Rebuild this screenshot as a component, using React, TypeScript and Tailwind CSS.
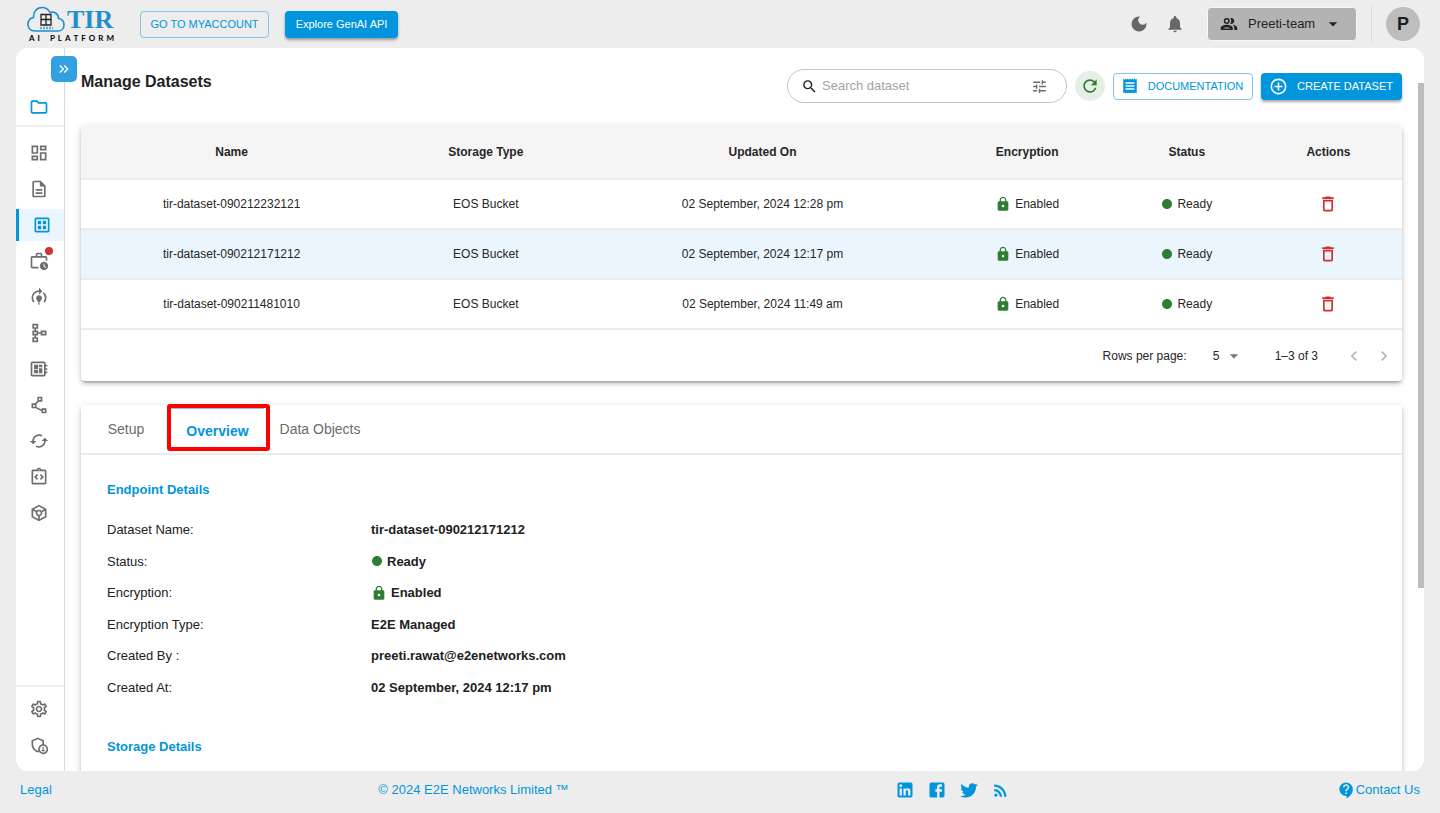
import React, { useState } from "react";
import {
  MdAddCircleOutline,
  MdArrowDropDown,
  MdCached,
  MdChevronLeft,
  MdChevronRight,
  MdCircle,
  MdContactSupport,
  MdDarkMode,
  MdDeleteOutline,
  MdKeyboardDoubleArrowRight,
  MdLock,
  MdModelTraining,
  MdNotifications,
  MdOutlineAdminPanelSettings,
  MdOutlineDashboard,
  MdOutlineDataset,
  MdOutlineDescription,
  MdOutlineDeveloperBoard,
  MdOutlineFolder,
  MdOutlineIntegrationInstructions,
  MdOutlinePolyline,
  MdOutlineSchema,
  MdOutlineSettings,
  MdOutlineToken,
  MdOutlineWorkHistory,
  MdReceipt,
  MdRefresh,
  MdRssFeed,
  MdSearch,
  MdTune,
} from "react-icons/md";

interface Dataset {
  name: string;
  storage: string;
  updatedOn: string;
}

const datasets: Dataset[] = [
  {
    name: "tir-dataset-090212232121",
    storage: "EOS Bucket",
    updatedOn: "02 September, 2024 12:28 pm",
  },
  {
    name: "tir-dataset-090212171212",
    storage: "EOS Bucket",
    updatedOn: "02 September, 2024 12:17 pm",
  },
  {
    name: "tir-dataset-090211481010",
    storage: "EOS Bucket",
    updatedOn: "02 September, 2024 11:49 am",
  },
];

const navItems = [
  { label: "Dashboard", icon: MdOutlineDashboard },
  { label: "Notebooks", icon: MdOutlineDescription },
  { label: "Datasets", icon: MdOutlineDataset },
  { label: "Jobs", icon: MdOutlineWorkHistory, badge: true },
  { label: "Model training", icon: MdModelTraining },
  { label: "Pipelines", icon: MdOutlineSchema },
  { label: "Inference", icon: MdOutlineDeveloperBoard },
  { label: "Vector database", icon: MdOutlinePolyline },
  { label: "Sync", icon: MdCached },
  { label: "API tokens", icon: MdOutlineIntegrationInstructions },
  { label: "Containers", icon: MdOutlineToken },
];

const socialPaths = [
  {
    label: "LinkedIn",
    d: "M19 3a2 2 0 0 1 2 2v14a2 2 0 0 1-2 2H5a2 2 0 0 1-2-2V5a2 2 0 0 1 2-2h14m-.5 15.5v-5.3a3.26 3.26 0 0 0-3.26-3.26c-.85 0-1.84.52-2.32 1.3v-1.11h-2.79v8.37h2.79v-4.93c0-.77.62-1.4 1.39-1.4a1.4 1.4 0 0 1 1.4 1.4v4.93h2.79M6.88 8.56a1.68 1.68 0 0 0 1.68-1.68c0-.93-.75-1.69-1.68-1.69a1.69 1.69 0 0 0-1.69 1.69c0 .93.76 1.68 1.69 1.68m1.39 9.94v-8.37H5.5v8.37h2.77z",
  },
  {
    label: "Facebook",
    d: "M5 3h14a2 2 0 0 1 2 2v14a2 2 0 0 1-2 2H5a2 2 0 0 1-2-2V5a2 2 0 0 1 2-2m13 2h-2.5A3.5 3.5 0 0 0 12 8.5V11h-2v3h2v7h3v-7h3v-3h-3V9a1 1 0 0 1 1-1h2V5z",
  },
  {
    label: "Twitter",
    d: "M22.46 6c-.77.35-1.6.58-2.46.69.88-.53 1.56-1.37 1.88-2.38-.83.5-1.75.85-2.72 1.05C18.37 4.5 17.26 4 16 4c-2.35 0-4.27 1.92-4.27 4.29 0 .34.04.67.11.98C8.28 9.09 5.11 7.38 3 4.79c-.37.63-.58 1.37-.58 2.15 0 1.49.75 2.81 1.91 3.56-.71 0-1.37-.2-1.95-.5v.03c0 2.08 1.48 3.82 3.44 4.21a4.22 4.22 0 0 1-1.93.07 4.28 4.28 0 0 0 4 2.98 8.521 8.521 0 0 1-5.33 1.84c-.34 0-.68-.02-1.02-.06C3.44 20.29 5.7 21 8.12 21 16 21 20.33 14.46 20.33 8.79c0-.19 0-.37-.01-.56.84-.6 1.56-1.36 2.14-2.23z",
  },
];

const TeamIcon: React.FC = () => (
  <svg viewBox="0 0 24 24" className="size-[18px]" fill="currentColor">
    <circle cx="9" cy="8" r="3" fill="none" stroke="currentColor" strokeWidth="2" />
    <path d="M9 13c-2.67 0-8 1.34-8 4v3h16v-3c0-2.66-5.33-4-8-4zM4 18c.5-.8 2.800-1.800 5-1.800s4.500 1 5 1.800z" fillRule="evenodd" />
    <path d="M15 12c2.210 0 4-1.790 4-4s-1.790-4-4-4c-.47 0-.91.1-1.330.24C14.500 5.270 15 6.580 15 8s-.5 2.730-1.330 3.760c.42.14.86.24 1.330.24zM16.670 13.130C18.040 14.060 19 15.320 19 17v3h4v-3c0-2.180-3.570-3.470-6.330-3.870z" />
  </svg>
);

const Logo: React.FC = () => (
  <a href="#" aria-label="TIR AI Platform" className="flex w-[88px] flex-col pt-px">
    <span className="flex h-[27px] items-center">
      <svg viewBox="0 0 38 27" className="h-[27px] w-[38px]" fill="none">
        <path
          d="M8 25C3 25 1 21.500 1 18.500C1 14.500 3.500 12 6.500 11.500C6 6 9.500 1.500 15 1.500C19 1.500 21.500 3.500 23 6.500C27.500 5 31.500 8 31.500 12.500C35 13 37 15.500 37 18.700C37 22.500 34.500 25 31 25Z"
          stroke="#1f8fd0"
          strokeWidth="1.600"
        />
        <path
          d="M14 8.500h10v10.500h-10zM19 8.500v10.500M14 13.500h10"
          stroke="#222"
          strokeWidth="1.300"
        />
        <path
          d="M13 22h13"
          stroke="#5aaee0"
          strokeWidth="2.500"
          strokeDasharray="2 1"
        />
      </svg>
      <span className="ml-[2px] font-['Liberation_Serif',serif] text-[26px] leading-[27px] font-bold text-[#1f8fd0]">
        TIR
      </span>
    </span>
    <span className="flex justify-between pt-px pr-px pl-0.5 font-[Lato,sans-serif] text-[8px] leading-[9px] font-bold text-black">
      {"AI PLATFORM".split("").map((letter, i) => (
        <span key={i} className={letter === " " ? "w-1" : ""}>
          {letter}
        </span>
      ))}
    </span>
  </a>
);

const Header: React.FC = () => (
  <header className="flex h-12 shrink-0 items-center pr-5 pl-[27px]">
    <Logo />
    <button className="ml-[25px] flex h-[27px] w-[129px] items-center justify-center rounded border border-[#80c5eb] text-[11px] text-[#0095dc]">
      GO TO MYACCOUNT
    </button>
    <button className="ml-4 flex h-[27px] w-[113px] items-center justify-center rounded bg-[#0095dc] text-[11px] text-white shadow-[0_2px_3px_rgba(0,0,0,0.35)]">
      Explore GenAI API
    </button>
    <div className="ml-auto flex items-center">
      <button aria-label="Toggle dark mode" className="text-[#666]">
        <MdDarkMode size={20} />
      </button>
      <button aria-label="Notifications" className="ml-4 text-[#666]">
        <MdNotifications size={20} />
      </button>
      <button className="ml-[22px] flex h-[34px] w-[150px] items-center rounded border border-[#f8f8f8] bg-[#b3b3b3] pl-3 text-[13px] text-[#222]">
        <TeamIcon />
        <span className="ml-[10px]">Preeti-team</span>
        <MdArrowDropDown size={20} className="ml-2" />
      </button>
      <div className="ml-[14px] h-9 w-px bg-[#d9d9d9]" />
      <button className="ml-[14px] size-[34px] rounded-full bg-[#bdbdbd] text-[18px] font-bold text-[#1c1c1c]">
        P
      </button>
    </div>
  </header>
);

const Sidebar: React.FC = () => (
  <nav className="relative flex w-[49px] shrink-0 flex-col border-r border-[#d9d9d9] text-[#6e6e6e]">
    <button
      aria-label="Expand menu"
      className="absolute top-2 left-[35px] z-10 flex size-[26px] items-center justify-center rounded-[5px] bg-[#33a0df] text-white"
    >
      <MdKeyboardDoubleArrowRight size={16} />
    </button>
    <a
      href="#"
      aria-label="Projects"
      className="flex h-[79px] items-end border-b-2 border-[#eee] pb-2 pl-[13px] text-[#0095dc]"
    >
      <MdOutlineFolder size={20} />
    </a>
    <ul className="flex flex-col gap-1 pt-[10px]">
      {navItems.map(({ label, icon: Icon, badge }) => (
        <li key={label}>
          <a
            href="#"
            aria-label={label}
            className={
              label === "Datasets"
                ? "flex h-8 items-center border-l-3 border-[#0095dc] bg-[#ebf5fd] pl-[13px] text-[#0095dc]"
                : "flex h-8 items-center pl-[13px]"
            }
          >
            <span className="relative">
              <Icon size={20} />
              {badge && (
                <span className="absolute -top-1 -right-1 size-2 rounded-full bg-[#d32f2f]" />
              )}
            </span>
          </a>
        </li>
      ))}
    </ul>
    <div className="mt-auto flex flex-col gap-1 border-t-2 border-[#eee] pt-[6px] pb-[10px]">
      <a href="#" aria-label="Settings" className="flex h-8 items-center pl-[13px]">
        <MdOutlineSettings size={20} />
      </a>
      <a href="#" aria-label="Access" className="flex h-8 items-center pl-[13px]">
        <MdOutlineAdminPanelSettings size={20} />
      </a>
    </div>
  </nav>
);

const Toolbar: React.FC = () => (
  <div className="flex items-center">
    <h1 className="mb-2 text-[16px] leading-6 font-bold text-[#212121]">
      Manage Datasets
    </h1>
    <label className="ml-auto flex h-[34px] w-[280px] items-center rounded-full border border-[#c4c4c4] pr-[18px] pl-[13px]">
      <MdSearch size={17} className="shrink-0 text-[#222]" />
      <input
        type="text"
        aria-label="Search dataset"
        placeholder="Search dataset"
        className="ml-1 min-w-0 flex-1 text-[13px] outline-none placeholder:text-[#a3a3a3]"
      />
      <MdTune size={17} className="shrink-0 text-[#6e6e6e]" />
    </label>
    <button
      aria-label="Refresh"
      className="ml-2 flex size-[30px] items-center justify-center rounded-full bg-[#e5efe5] text-[#2e7d32]"
    >
      <MdRefresh size={20} />
    </button>
    <button className="ml-2 flex h-[27px] w-[140px] items-center rounded border border-[#80c5eb] pl-[7px] text-[11px] text-[#0095dc]">
      <MdReceipt size={18} />
      <span className="flex-1 text-center">DOCUMENTATION</span>
    </button>
    <button className="ml-2 flex h-[27px] w-[141px] items-center rounded bg-[#0095dc] pl-2 text-[11px] text-white shadow-[0_2px_3px_rgba(0,0,0,0.35)]">
      <MdAddCircleOutline size={19} />
      <span className="flex-1 text-center">CREATE DATASET</span>
    </button>
  </div>
);

interface DatasetTableProps {
  selected: string;
  onSelect: (name: string) => void;
}

const DatasetTable: React.FC<DatasetTableProps> = ({ selected, onSelect }) => (
  <section className="mt-[23px] rounded bg-white text-[#262626] shadow-[0_3px_3px_-2px_rgba(0,0,0,0.3),0_3px_4px_rgba(0,0,0,0.14),0_1px_8px_rgba(0,0,0,0.12)]">
    <table className="w-full table-fixed text-center text-[12px]">
      <colgroup>
        <col className="w-[301px]" />
        <col className="w-[207px]" />
        <col className="w-[346px]" />
        <col className="w-[183px]" />
        <col className="w-[136px]" />
        <col className="w-[147px]" />
      </colgroup>
      <thead>
        <tr className="h-[53px] border-b-2 border-[#ebebeb] bg-[#f5f5f5]">
          <th className="rounded-tl">Name</th>
          <th>Storage Type</th>
          <th>Updated On</th>
          <th>Encryption</th>
          <th>Status</th>
          <th className="rounded-tr">Actions</th>
        </tr>
      </thead>
      <tbody>
        {datasets.map((d) => (
          <tr
            key={d.name}
            onClick={() => onSelect(d.name)}
            className={
              d.name === selected
                ? "h-[50px] cursor-pointer border-b-2 border-[#ebebeb] bg-[#ebf5fd]"
                : "h-[50px] cursor-pointer border-b-2 border-[#ebebeb]"
            }
          >
            <td>{d.name}</td>
            <td>{d.storage}</td>
            <td>{d.updatedOn}</td>
            <td>
              <span className="flex items-center justify-center gap-1">
                <MdLock size={16} className="text-[#2e7d32]" />
                Enabled
              </span>
            </td>
            <td>
              <span className="flex items-center justify-center gap-1">
                <MdCircle size={12} className="text-[#2e7d32]" />
                Ready
              </span>
            </td>
            <td>
              <button
                aria-label={`Delete ${d.name}`}
                className="align-middle text-[#d32f2f]"
              >
                <MdDeleteOutline size={20} />
              </button>
            </td>
          </tr>
        ))}
      </tbody>
    </table>
    <div className="flex h-[51px] items-center justify-end pr-2 text-[12px]">
      <label htmlFor="rows">Rows per page:</label>
      <span className="relative ml-[22px] flex items-center">
        <select id="rows" className="w-8 appearance-none pl-1 outline-none">
          <option>5</option>
        </select>
        <MdArrowDropDown
          size={20}
          className="pointer-events-none absolute left-[15px] text-[#757575]"
        />
      </span>
      <span className="ml-[34px]">1–3 of 3</span>
      <button aria-label="Previous page" className="ml-[26px] text-[#b5b5b5]">
        <MdChevronLeft size={20} />
      </button>
      <button aria-label="Next page" className="ml-[10px] text-[#b5b5b5]">
        <MdChevronRight size={20} />
      </button>
    </div>
  </section>
);

const DatasetDetails: React.FC<{ name: string }> = ({ name }) => {
  const rows = [
    { label: "Dataset Name:", value: name },
    {
      label: "Status:",
      value: "Ready",
      icon: <MdCircle size={12} className="mr-1 text-[#2e7d32]" />,
    },
    {
      label: "Encryption:",
      value: "Enabled",
      icon: <MdLock size={16} className="mr-1 text-[#2e7d32]" />,
    },
    { label: "Encryption Type:", value: "E2E Managed" },
    { label: "Created By :", value: "preeti.rawat@e2enetworks.com" },
    { label: "Created At:", value: "02 September, 2024 12:17 pm" },
  ];

  return (
    <section className="mt-6 rounded bg-white pb-10 shadow-[0_3px_3px_-2px_rgba(0,0,0,0.3),0_3px_4px_rgba(0,0,0,0.14),0_1px_8px_rgba(0,0,0,0.12)]">
      <div
        role="tablist"
        className="flex h-[50px] border-b-2 border-[#ebebeb] text-[14px] text-[#6b6b6b]"
      >
        <button role="tab" className="w-[90px]">
          Setup
        </button>
        <button
          role="tab"
          aria-selected="true"
          className="relative w-[93px] border-t-4 border-[#80c5eb] font-bold text-[#0095dc]"
        >
          Overview
          {/* highlight frame */}
          <span className="pointer-events-none absolute -top-[5px] -left-1 h-[47px] w-[103px] rounded-[3px] border-4 border-[#ff0000]" />
        </button>
        <button role="tab" className="ml-2 w-[96px]">
          Data Objects
        </button>
      </div>
      <div className="px-[26px] text-[13px] text-[#212121]">
        <h2 className="pt-[25px] leading-5 font-bold text-[#0095dc]">
          Endpoint Details
        </h2>
        <dl className="mt-[14px] grid h-[189px] grid-rows-6">
          {rows.map((row) => (
            <div key={row.label} className="flex items-center">
              <dt className="w-[264px]">{row.label}</dt>
              <dd className="flex items-center font-bold">
                {row.icon}
                {row.value}
              </dd>
            </div>
          ))}
        </dl>
        <h2 className="mt-[34px] leading-5 font-bold text-[#0095dc]">
          Storage Details
        </h2>
      </div>
    </section>
  );
};

const Footer: React.FC = () => (
  <footer className="flex h-[42px] shrink-0 items-center justify-between px-5 pb-1 text-[13px] text-[#0095dc]">
    <a href="#">Legal</a>
    <span>© 2024 E2E Networks Limited ™</span>
    <div className="flex items-center gap-3">
      {socialPaths.map((s) => (
        <a key={s.label} href="#" aria-label={s.label}>
          <svg viewBox="0 0 24 24" className="size-5" fill="currentColor">
            <path d={s.d} />
          </svg>
        </a>
      ))}
      <a href="#" aria-label="RSS">
        <MdRssFeed size={19} />
      </a>
    </div>
    <a href="#" className="flex items-center">
      <MdContactSupport size={19} />
      Contact Us
    </a>
  </footer>
);

const App: React.FC = () => {
  const [selected, setSelected] = useState("tir-dataset-090212171212");

  return (
    <div className="flex h-screen flex-col bg-[#ededed] font-['Liberation_Sans',Arial,sans-serif]">
      <Header />
      <div className="mx-4 flex min-h-0 flex-1 overflow-hidden rounded-xl bg-white">
        <Sidebar />
        <main className="min-w-0 flex-1 overflow-hidden px-4 pt-[21px]">
          <Toolbar />
          <DatasetTable selected={selected} onSelect={setSelected} />
          <DatasetDetails name={selected} />
        </main>
        {/* Scrollbar */}
        <div className="mt-[35px] h-[505px] w-[6px] shrink-0 bg-[#bdbdbd]" />
      </div>
      <Footer />
    </div>
  );
};

export default App;
